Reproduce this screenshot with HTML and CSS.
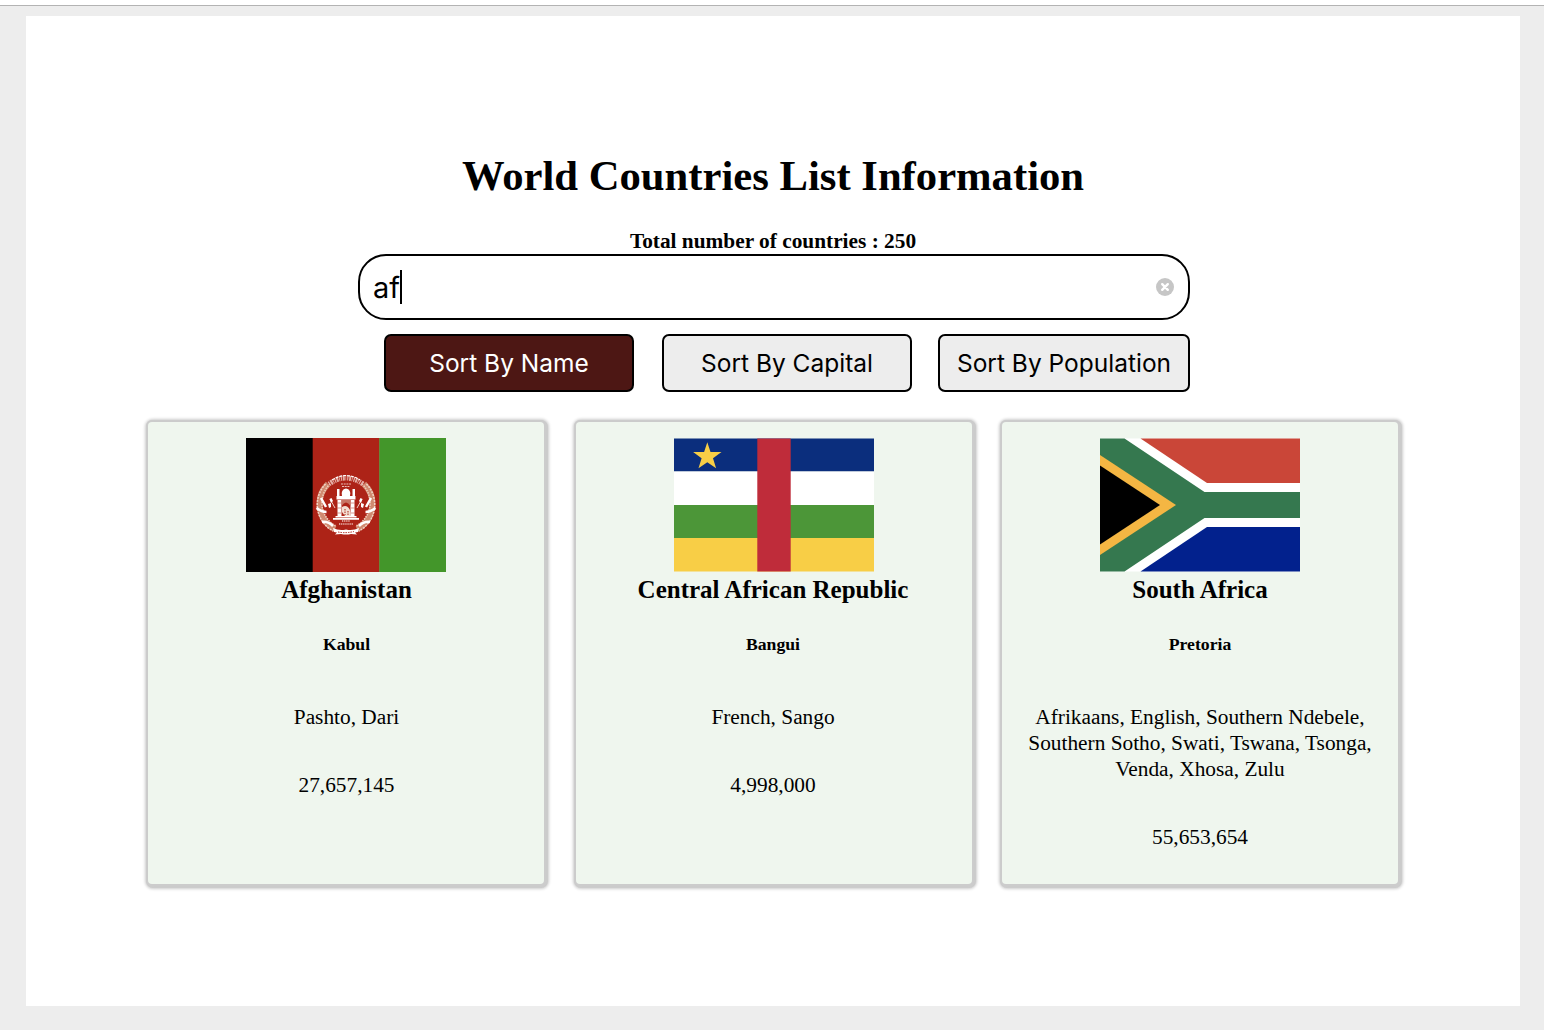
FILE: index.html
```html
<!DOCTYPE html>
<html lang="en">
<head>
<meta charset="utf-8">
<title>World Countries List</title>
<link rel="stylesheet" href="styles.css">
</head>
<body>
<main class="page">
  <h1 class="title">World Countries List Information</h1>
  <p class="total">Total number of countries : 250</p>
  <div class="search">
    <span class="query">af</span><span class="caret"></span>
    <svg class="clear" width="18" height="18" viewBox="0 0 18 18"><circle cx="9" cy="9" r="9" fill="#c6c6c6"/><path d="M6.200 6.200l5.600 5.600M11.800 6.200l-5.600 5.600" stroke="#fff" stroke-width="2.4" stroke-linecap="round"/></svg>
  </div>
  <div class="sorts">
    <button class="sort active">Sort By Name</button>
    <button class="sort">Sort By Capital</button>
    <button class="sort population">Sort By Population</button>
  </div>
  <section class="cards">
    <article class="card first">
      <svg class="flag" viewBox="0 0 200 134">
        <rect width="67" height="134" fill="#000"/><rect x="66.7" width="67" height="134" fill="#ad2317"/><rect x="133.3" width="66.7" height="134" fill="#43962a"/>
        <g fill="none" stroke="#fff">
          <path d="M82 46A28 28 0 0 0 89 91M118 46A28 28 0 0 1 111 91" stroke="#d08a70" stroke-width="6"/>
          <path d="M79.500 46A30 30 0 0 0 87 93M120.500 46A30 30 0 0 1 113 93" stroke="#f1d3c5" stroke-width="1.500" stroke-dasharray="2 1"/>
          <path d="M84 46A26 26 0 0 0 90 88M116 46A26 26 0 0 1 110 88" stroke="#efcdbb" stroke-width="1.500" stroke-dasharray="1.500 1"/>
          <path d="M83 46Q100 34 117 46" stroke="#e5b0a7" stroke-width="5" stroke-dasharray="1.200 .8 2 .7 .8 1"/>
          <path d="M86 42Q100 33 114 42" stroke-width="1.2" stroke-dasharray="3 1"/>
          <path d="M95 46h10M96 48.500h8" stroke="#e9bdb5" stroke-width="1.2" stroke-dasharray="2 .7"/>
          <path d="M96 83h8M93 86h14" stroke="#e9bdb5" stroke-width="1.3" stroke-dasharray="1.300 .8"/>
          <path d="M70.500 70q5 4 10 4M129.500 70q-5 4-10 4M76 84q6-1 11 4M124 84q-6-1-11 4M75 60l5 9M125 60l-5 9" stroke-width="2.5"/>
          <path d="M84 61l5 9M116 61l-5 9" stroke="#efcfc8" stroke-width="1"/>
        </g>
        <g fill="#fff">
          <path d="M96 58q-1.500-6.500 4-7.500q5.500 1 4 7.500z"/>
          <path d="M91 51h2.500v8H91zM106.500 51h2.500v8h-2.500zM90.500 58h19v3.500h-19zM91.500 62h4v17h-4zM104.500 62h4v17h-4zM89.500 78h21v1.500h-21zM87 80h26v1.700H87z"/>
          <path d="M95.500 62h9v6q-4.500-7-9 0z" fill="#c77565"/>
          <path d="M96 69q5-3 8 3l1 6H99l-3-4z" fill="#f2ded3"/>
          <path d="M83.500 61l2-1 1.500 3-2 2zM116.500 61l-2-1-1.500 3 2 2zM82 66l3-1v4l-2 1zM118 66l-3-1v4l2 1z"/>
          <path d="M87 90q6 3 13 1.500q7 1.500 13-1.500l-1 4-3 .5 2 2-6-.5q-5 1-10 0l-6 .5 2-2-3-.5z"/>
        </g>
        <path d="M92 94q8 1.500 16-.5M99 71v6M102 73v5" fill="none" stroke="#ad2317" stroke-width="1" stroke-dasharray="1.500 1"/>
        <path d="M91 65h4M91 70h4M91 75h4M105 65h4M105 70h4M105 75h4" stroke="#c66a5c" stroke-width=".7"/>
      </svg>
      <h3 class="name">Afghanistan</h3>
      <h5 class="capital">Kabul</h5>
      <p class="languages">Pashto, Dari</p>
      <p class="people">27,657,145</p>
    </article>
    <article class="card second">
      <svg class="flag" viewBox="0 0 200 134">
        <path fill="#0b2e7d" d="M0 .6h200v33H0z"/><path fill="#fff" d="M0 33.500h200V67H0z"/><path fill="#4c9638" d="M0 67h200v33H0z"/><path fill="#f8ce46" d="M0 100h200v33.400H0z"/><path fill="#bf2c3a" d="M83.300.6h33.400v132.800H83.300z"/>
        <path fill="#f8ce46" d="M33.300 4.200l3.200 9.900h11l-8.500 6.200 3.100 9.900-8.800-6-8.800 6 3.100-9.900-8.500-6.200h11z"/>
      </svg>
      <h3 class="name">Central African Republic</h3>
      <h5 class="capital">Bangui</h5>
      <p class="languages">French, Sango</p>
      <p class="people">4,998,000</p>
    </article>
    <article class="card">
      <svg class="flag" viewBox="0 0 200 134">
        <path fill="#fff" d="M0 .6h200v132.800H0z"/>
        <path fill="#ca4638" d="M40.500.6H200V45H107z"/><path fill="#02218d" d="M40.500 133.400H200V89H107z"/>
        <path fill="#35784f" d="M0 .6h24.500L104.500 54H200v26h-95.500l-80 53.400H0z"/>
        <path fill="#f4b643" d="M0 17l76 50-76 50z"/><path d="M0 27.500L60 67 0 106.500z"/>
      </svg>
      <h3 class="name">South Africa</h3>
      <h5 class="capital">Pretoria</h5>
      <p class="languages">Afrikaans, English, Southern Ndebele, Southern Sotho, Swati, Tswana, Tsonga, Venda, Xhosa, Zulu</p>
      <p class="people">55,653,654</p>
    </article>
  </section>
</main>
</body>
</html>
```
FILE: styles.css
```css
* { box-sizing: border-box; }
body {
  margin: 0;
  height: 1025px;
  padding: 10px 24px 24px 26px;
  border-top: 1px solid #b3b3b3;
  background: #ededed;
  font: 21.33px/26px "Liberation Serif", serif;
  color: #000;
}
html { background: #fff; padding-top: 5px; height: 1030px; overflow: hidden; }
.page {
  width: 1494px;
  height: 990px;
  padding-top: 134px;
  background: #fff;
  display: flex;
  flex-direction: column;
}
.title, .total, .name, .capital, .languages, .people { margin: 0; text-align: center; }
.title { font-size: 42.67px; line-height: 52px; }
.total { margin-top: 26px; font-weight: bold; }
.search {
  width: 832px;
  height: 66px;
  margin-left: 332px;
  padding: 0 14px 0 13px;
  border: 2px solid #000;
  border-radius: 28px;
  display: flex;
  align-items: center;
  font: 29px/34px Inter, sans-serif;
}
.query { padding-top: 2px; }
.caret { width: 2px; height: 34px; background: #000; }
.clear { margin-left: auto; }
.sorts { display: flex; margin: 14px 0 0 358px; }
.sort {
  width: 250px;
  height: 58px;
  margin-right: 28px;
  padding: 0;
  border: 2px solid #000;
  border-radius: 7px;
  background: #ededed;
  color: #000;
  font: 24.5px/30px Inter, sans-serif;
  white-space: nowrap;
}
.sort.active { background: #4d1714; color: #fff; }
.sort.population { width: 252px; margin: 0 0 0 -2px; }
.cards {
  display: grid;
  grid-template-columns: 428px 426px 396px;
  margin: 30px 0 0 122px;
}
.card {
  width: 396px;
  height: 462px;
  padding: 16px 20px;
  border-radius: 4px;
  background: #eff6ee;
  box-shadow: 1px 1px 3px 4px #ccc, 0 0 0 2px #ccc, 1px 1px 0 3px #ccc;
  display: flex;
  flex-direction: column;
  align-items: center;
}
.first > :not(.flag) { padding-left: 1px; }
.second > :not(.flag) { padding-right: 2px; }
.flag { width: 200px; height: 134px; flex: none; }
.name { margin-top: 3px; font-size: 25px; line-height: 30px; }
.capital { margin-top: 28px; font-size: 17.7px; line-height: 22px; }
.languages { margin-top: 49px; }
.people { margin-top: 42px; }
```
